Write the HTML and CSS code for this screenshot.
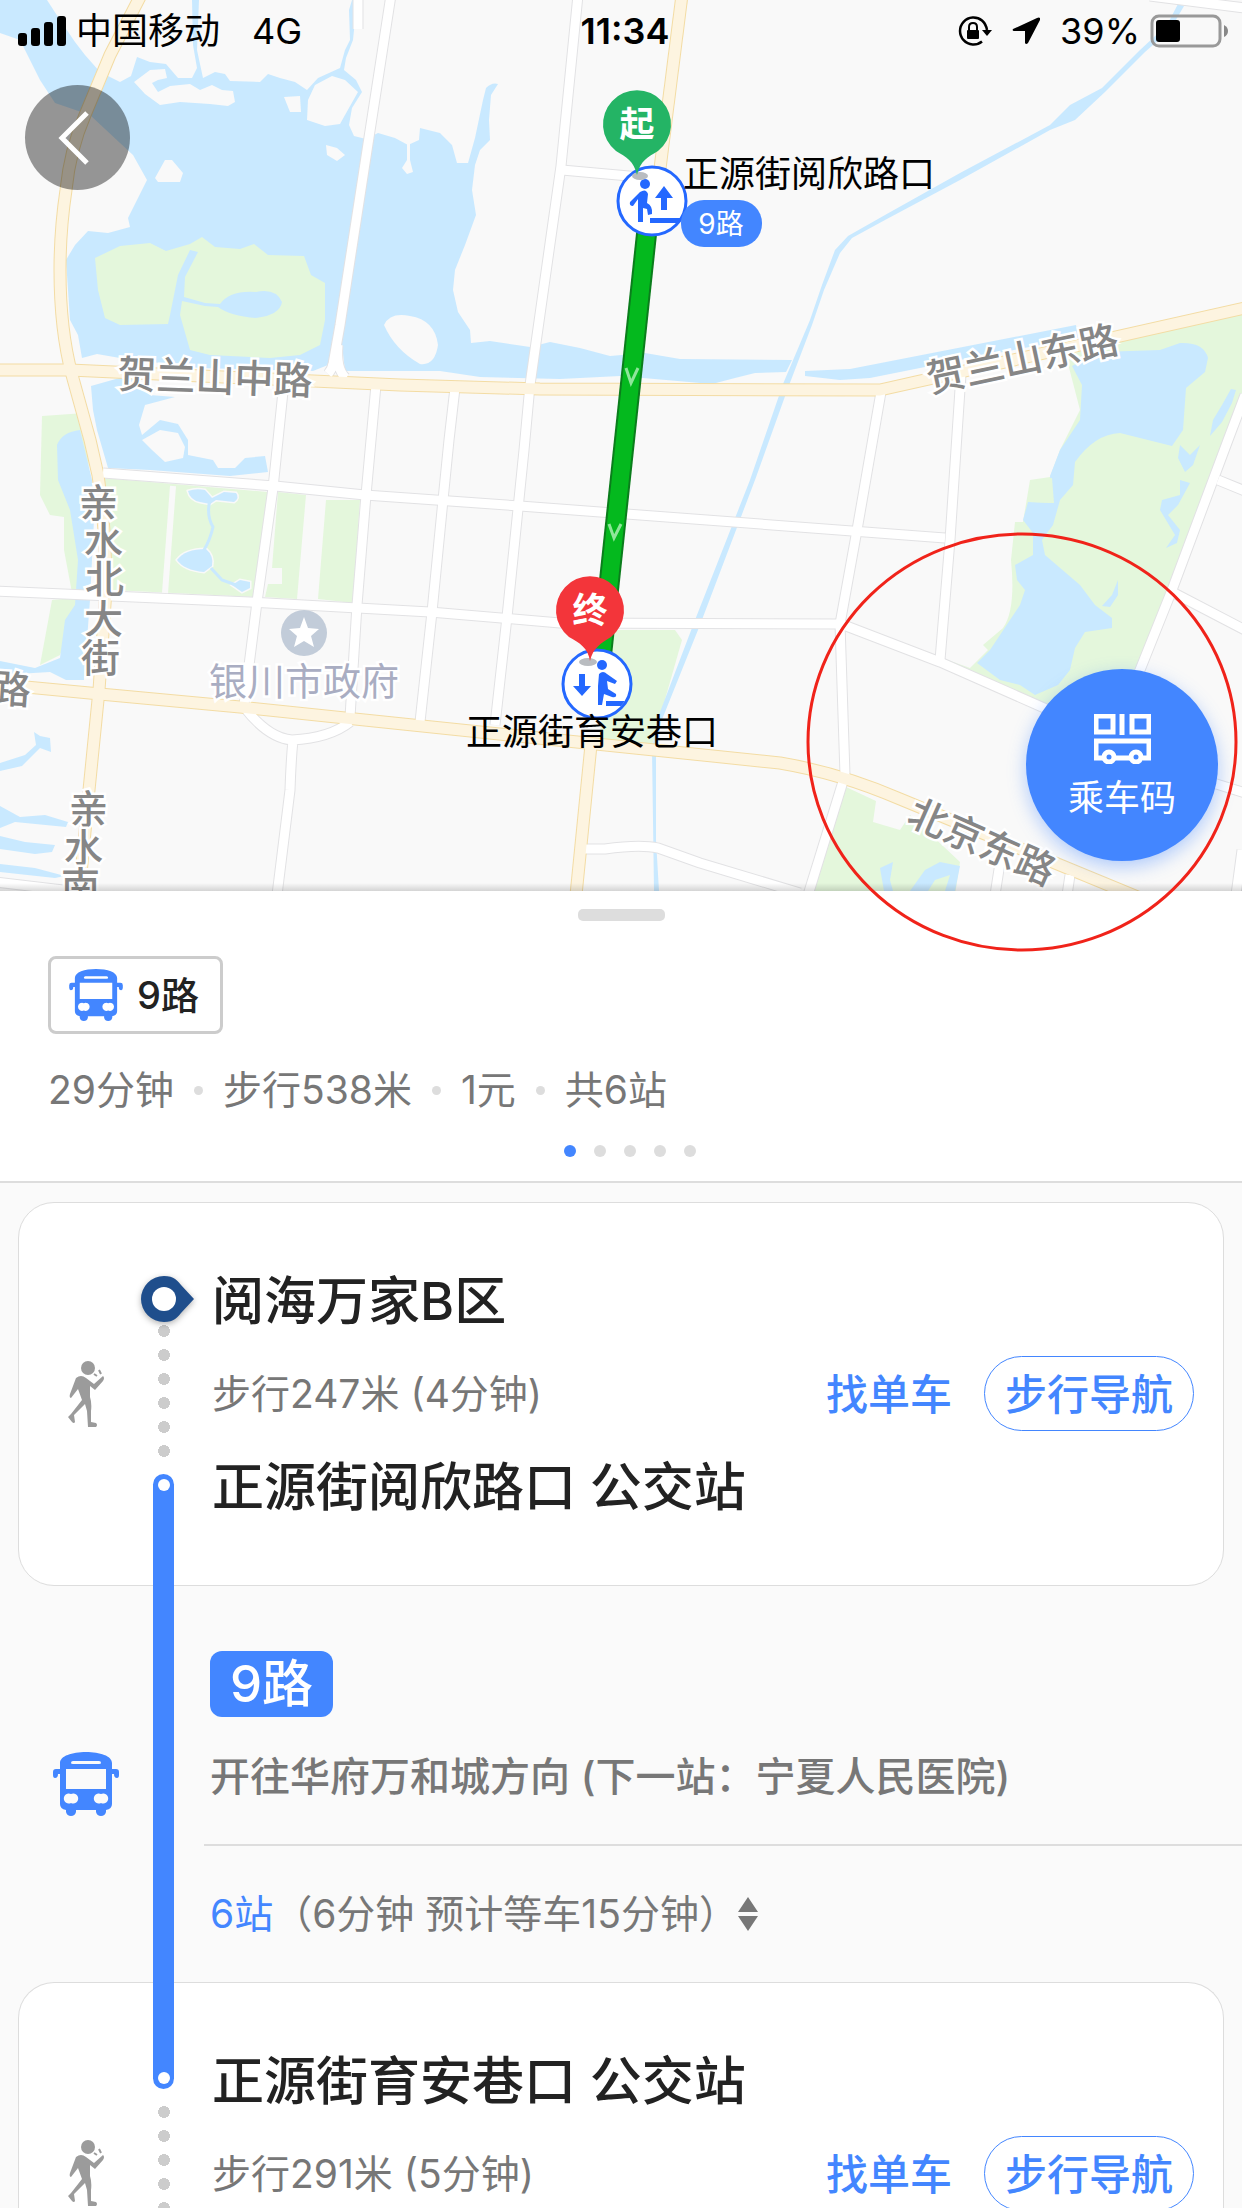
FILE: index.html
```
<!DOCTYPE html>
<html lang="zh-CN">
<head>
    <meta charset="UTF-8">
    <meta name="viewport" content="width=device-width, initial-scale=1.0">
    <title>公交路线</title>
    <link rel="stylesheet" href="styles.css">
</head>
<body>
    <svg class="symbols" aria-hidden="true">
        <symbol id="bus" viewBox="0 0 66 64">
            <path fill="currentColor" fill-rule="evenodd" d="M7 17 V11 C7 4 19 0 33 0 C47 0 59 4 59 11 V17 H63 Q66 17 66 20 V23 Q66 26 64 26 Q61 26 61 22 H59 V52 Q59 57 53 58 V60 Q52 64 48 64 Q44 64 43 60 V58 H23 V60 Q22 64 18 64 Q14 64 13 60 V58 Q7 57 7 52 V22 H5 Q5 26 2 26 Q0 26 0 23 V20 Q0 17 3 17 Z M20 9 Q18 9 18 11 Q18 12 20 12 H46 Q48 12 48 11 Q48 9 46 9 Z M13 17 V37 H53 V17 Z M18 42 A5 5 0 1 0 18 51 A5 5 0 1 0 18 42 Z M48 42 A5 5 0 1 0 48 51 A5 5 0 1 0 48 42 Z"/>
        </symbol>
        <symbol id="walker" viewBox="0 0 36 66">
            <circle cx="20" cy="7" r="7" fill="currentColor"/>
            <path fill="currentColor" d="M8 17 Q13 13 18 17 L26 23 L35 15 Q37 17 35 20 L27 29 L22 25 L22 36 Q24 42 23 50 L23 61 L28 62 Q30 64 28 66 L20 66 L19 50 L17 43 L6 54 L7 61 Q6 63 4 61 L0 56 L3 53 L14 39 L10 28 L3 37 Q1 37 2 33 Z"/>
            <path stroke="currentColor" stroke-width="2" d="M26 13 L29 15 M31 9 L33 13"/>
        </symbol>
    </svg>

    <div class="map">
        <svg class="map-canvas" viewBox="0 0 1242 891" role="img" aria-label="路线地图">
            <defs>
                <g id="major">
                    <path d="M141 -5 L110 55 L85 115 Q70 150 66 190 Q60 230 60 270 Q60 330 72 375 L90 440 L98 475 Q106 530 106 590 L99 690 L88 800 L79 895"/>
                    <path d="M-5 370 H70 L400 385 L540 389 L880 390 L1245 308"/>
                    <path d="M-5 684 L100 694 L240 707 L480 732 L780 763 Q840 773 900 799 L1140 898"/>
                    <path d="M682 -5 L656 200"/>
                    <path d="M591 745 L576 895"/>
                </g>
                <g id="minor">
                    <path d="M391 -5 L340 325 L332 370"/>
                    <path d="M328 374 Q335 366 337 345 M346 378 Q336 370 338 345"/>
                    <path d="M358 -5 V29"/>
                    <path d="M578 -5 L561 166 L530 385 L524 450 L507 617 L495 725"/>
                    <path d="M562 170 L640 177"/>
                    <path d="M455 388 L449 440 L443 500 L432 612 L420 722"/>
                    <path d="M376 385 L366 495 L357 605 L350 717"/>
                    <path d="M284 382 L273 488 L257 602 L244 705"/>
                    <path d="M103 473 L275 486 L365 495 L520 506 L680 518 L945 538"/>
                    <path d="M-5 591 L250 602 L430 612 L560 623 L841 624 L940 662 L1060 715"/>
                    <path d="M881 392 L857 530 L840 624 L845 775 L808 895"/>
                    <path d="M961 374 L950 540 L940 660"/>
                    <path d="M1245 395 L1228 440 L1172 590 L1120 720"/>
                    <path d="M1218 480 L1245 491 M1174 593 L1245 630 M1210 782 L1245 793"/>
                    <path d="M244 707 Q268 738 292 740 Q330 738 350 722 M293 740 Q291 760 290 790 L277 895"/>
                    <path d="M584 849 H605 Q640 844 658 848 L700 863 L800 893"/>
                    <path d="M1150 -4 L1245 8"/>
                    <path d="M1002 850 L995 895 M1070 875 L1067 895 M-5 882 L80 892 M1242 850 L1236 895"/>
                </g>
            </defs>

            <rect width="1242" height="891" fill="#f9f9f9"/>

            <!-- parks -->
            <g fill="#e4f7dc">
                <path d="M42 416 L85 413 L90 440 L80 600 L60 655 L40 665 L52 600 L73 598 L64 550 V517 L50 515 L40 495 Z"/>
                <path d="M103 478 L268 492 L255 597 L112 590 Z"/>
                <path d="M278 492 L306 495 L297 599 L265 597 L268 584 L282 584 L282 568 L272 568 Z M326 500 L360 500 L353 603 L318 599 Z"/>
                <path d="M608 630 H675 L682 640 L652 745 L600 738 Z"/>
                <path d="M1245 310 L1110 342 L1066 356 L1080 410 L1060 450 L1050 477 L1030 480 L1023 522 L1015 522 L1011 560 Q1016 610 1003 628 L983 645 L988 650 L970 668 L945 659 L1060 710 L1135 675 L1228 440 L1245 400 Z"/>
                <path d="M846 787 L876 801 L873 822 L900 830 L910 815 L960 862 L955 895 H812 Z"/>
            </g>

            <!-- water -->
            <g fill="#c9e9ff">
                <path d="M0 0 H47 L60 20 L75 42 L85 55 L100 72 L120 82 L131 76 L137 57 L150 62 L166 64 L178 78 L192 78 L197 68 L193 45 L192 0 H199 L197 50 L203 78 L215 72 L225 74 L230 81 L260 82 L268 74 L280 78 L295 82 L307 90 L318 78 L340 68 L345 50 L350 40 L349 10 L352 0 H357 L353 40 L346 58 L344 70 L356 80 L362 92 L352 108 L349 125 L354 136 L366 139 L378 133 L395 138 L408 145 L419 140 L420 128 L440 133 L452 145 L457 163 L468 163 L475 138 L483 100 L486 88 Q492 82 498 84 L491 95 L489 120 L490 140 L480 150 L475 165 L472 190 L476 215 L465 245 L455 270 L453 290 L458 312 L470 330 L471 343 L490 341 L530 347 L550 342 L580 348 L610 356 L645 353 L680 359 L792 360 L786 372 L755 373 L735 378 L712 384 L620 376 L560 379 L480 377 L440 371 H345 L342 345 L333 345 L328 365 L313 371 L200 368 L120 358 L97 354 L82 358 L78 335 L70 320 L66 260 L75 245 L88 231 L108 233 L130 227 L128 218 L137 200 L147 180 L133 155 L120 143 L90 115 L55 103 L40 80 L20 40 L0 33 Z"/>
                <path d="M91 386 L130 375 L150 395 L175 397 L145 405 L139 425 L142 435 L160 420 L178 424 L188 440 L188 455 L213 460 L218 468 L235 468 L245 458 L265 456 L268 472 L230 476 L150 470 L108 468 L97 430 L93 410 Z"/>
                <path d="M57 445 Q62 432 80 430 L92 480 L94 520 L90 600 L84 680 L66 680 L50 672 L0 675 V661 L35 668 L60 658 L65 620 L75 605 L78 560 L70 510 L58 480 Z"/>
                <path d="M805 371 L850 369 L1076 325 L1078 338 L960 360 L870 378 L840 380 L805 376 Z"/>
                <path d="M1072 366 L1100 352 L1160 350 L1180 343 Q1204 342 1208 358 L1205 372 L1186 388 L1183 430 L1172 446 L1120 433 Q1095 434 1075 462 L1073 485 L1060 500 L1053 525 L1042 540 L1045 555 L1080 585 L1095 605 L1112 618 L1112 628 L1085 632 L1075 648 L1070 670 L1058 685 L1035 695 L1020 685 L1000 680 L977 663 L990 650 L1020 605 L1025 590 L1017 580 L1015 565 L1033 555 L1033 533 L1023 520 L1028 502 L1053 503 L1050 476 L1060 450 L1080 420 L1082 385 Z"/>
                <path d="M0 763 L25 755 L36 745 L34 732 L40 736 L50 738 L51 752 L40 748 L22 766 L0 771 Z"/>
                <path d="M0 806 L20 817 L45 815 L68 822 L66 827 L15 822 L0 828 Z M0 836 L25 842 L55 845 L52 852 L35 854 L0 849 Z M0 864 L35 868 L65 876 L55 878 L0 872 Z"/>
                <path d="M1180 445 L1190 455 L1200 445 L1193 465 L1185 472 L1178 458 Z M1180 480 L1190 483 L1178 505 L1168 515 L1180 530 L1177 543 L1166 548 L1175 535 L1160 510 L1162 500 L1180 495 Z M1118 580 L1118 595 L1110 607 L1102 606 L1112 595 Z"/>
                <path d="M880 868 L893 862 L890 880 L893 891 H884 Z M910 891 L925 870 L940 862 L960 866 L955 891 H945 L950 875 L935 880 L928 891 Z"/>
                <path d="M1231 389 L1236 390 L1232 403 L1222 422 L1210 436 L1213 420 L1222 405 Z"/>
                <path d="M1178 4 L1184 6 L1170 30 L1145 52 L1105 92 L1075 120 L1050 130 L960 180 L885 220 L852 238 L840 253 L824 290 L812 325 L788 388 L755 480 L700 625 L661 722 L656 750 V840 L659 891 H654 L652 750 L657 720 L695 620 L750 480 L783 384 L810 320 L822 285 L835 250 L848 236 L885 215 L960 173 L1050 125 L1070 105 L1102 88 L1140 50 L1167 25 Z"/>
            </g>

            <!-- park ponds -->
            <g class="ponds">
                <path d="M188 491 Q196 488 205 490 L212 498 L224 492 L236 493 Q240 498 234 502 L216 500 L210 504 L200 502 Q190 500 188 491 Z"/>
                <path d="M177 560 Q185 549 206 549 Q214 556 212 566 L204 572 Q184 570 177 560 Z"/>
                <path d="M232 585 L240 580 L250 582 L250 588 L242 592 Z"/>
                <path class="stream" d="M210 500 Q206 515 213 527 Q210 540 204 550 M211 568 L222 580 L236 585"/>
            </g>

            <!-- islands -->
            <g fill="#f9f9f9">
                <path d="M134 82 L150 70 L165 69 L167 78 L158 80 L152 83 L158 92 L170 86 L190 84 L200 90 L212 85 L222 90 L233 91 L235 102 L228 106 L210 104 L180 102 L160 105 L145 94 Z"/>
                <path d="M308 100 L315 85 L332 76 L345 80 L358 92 L345 115 L340 124 L325 126 L307 120 Z"/>
                <path d="M284 97 L300 96 L301 112 L290 112 Z M326 145 L337 148 L345 155 L337 161 L327 155 Z M155 178 L165 160 L172 160 L183 173 L180 182 L158 182 Z"/>
                <path d="M407 140 H410 L410 160 L413 172 L407 174 L402 168 L407 160 Z"/>
                <path d="M384 325 Q390 312 410 316 Q435 320 438 345 Q435 366 420 364 Q395 350 384 325 Z"/>
                <path d="M142 440 L160 430 L178 433 L185 447 L183 458 L165 462 L152 450 Z"/>
            </g>
            <g fill="#e4f7dc">
                <path d="M95 258 L120 246 L150 243 L166 251 L190 244 L202 237 L215 247 L240 249 L254 244 L268 255 L304 256 L311 275 L325 283 L325 320 L320 345 L300 355 L270 358 L210 355 L190 350 L180 315 L182 301 L205 306 L218 307 Q230 316 256 318 Q280 315 282 302 Q276 288 256 292 Q230 290 220 304 L205 303 L184 297 L185 277 L198 252 L190 250 L178 275 L170 315 L168 324 L120 325 L105 318 L98 290 Z"/>
                <path d="M1030 481 L1052 478 L1054 503 L1030 502 Z"/>
            </g>

            <!-- roads -->
            <g class="road">
                <use href="#minor" stroke="#e2e2e4" stroke-width="11"/>
                <use href="#major" stroke="#f3dca4" stroke-width="13"/>
                <use href="#minor" stroke="#fff" stroke-width="9"/>
                <use href="#major" stroke="#fdf4e0" stroke-width="11"/>
                <path d="M173 486 L165 593" stroke="#f9f9f9" stroke-width="6"/>
            </g>

            <!-- poi -->
            <circle cx="304" cy="633" r="23" fill="#c2ccd9"/>
            <path fill="#fff" d="M304 617 L308 628 L319 629 L311 636 L314 647 L304 641 L294 647 L297 636 L289 629 L300 628 Z"/>
            <text class="poi" x="209" y="695">银川市政府</text>

            <g class="road-name">
                <text transform="translate(117 388) rotate(2)">贺兰山中路</text>
                <text transform="translate(930 393) rotate(-12)">贺兰山东路</text>
                <text transform="translate(905 823) rotate(24)">北京东路</text>
                <text x="79 84 85 84 81" y="517 555 593 633 672">亲水北大街</text>
                <text x="69 64 61" y="823 862 900">亲水南</text>
                <text transform="translate(-9 702) rotate(4)">路</text>
            </g>

            <!-- bus route -->
            <path d="M648 220 L601 660" stroke="#0b7d1c" stroke-width="21"/>
            <path d="M648 220 L601 660" stroke="#04b91e" stroke-width="17"/>
            <path class="chevron" d="M626 368 L631 383 L638 368 M609 524 L614 538 L621 524"/>

            <circle class="stop" cx="652" cy="201" r="34"/>
            <g fill="#2468ff">
                <circle cx="645" cy="184" r="5"/>
                <path d="M640 192 Q646 188 648 194 L647 203 Q653 206 652 214 L648 215 L647 209 L643 208 L643 222 L638 222 V203 L638 199 L633 206 Q629 206 630 202 Z"/>
                <path d="M664 186 L673 198 H667 V210 H661 V198 H655 Z M650 218 H681 L678 223 H650 Z"/>
            </g>
            <circle class="stop" cx="597" cy="684" r="34"/>
            <g fill="#2468ff">
                <circle cx="602" cy="665" r="5"/>
                <path d="M599 674 Q603 670 607 674 L617 681 L615 684 L607 681 L608 689 L616 694 Q617 698 612 697 L604 694 L602 705 H598 V686 Z"/>
                <path d="M582 696 L573 686 H579 V674 H585 V686 H591 Z M606 701 H625 L621 706 H606 Z"/>
            </g>
            <ellipse cx="640" cy="176" rx="8" ry="4" fill="#b9bcc0"/>
            <path d="M637 175 C634 161 626 157 616 151 A34 34 0 1 1 658 151 C648 157 640 161 637 175 Z" fill="#24b465"/>
            <text class="pin" x="637" y="137">起</text>
            <ellipse cx="588" cy="662" rx="9" ry="4" fill="#b9bcc0"/>
            <path d="M590 661 C588 648 580 643 569 637 A34 34 0 1 1 611 637 C601 643 593 648 590 661 Z" fill="#f3353a"/>
            <text class="pin" x="590" y="623">终</text>

            <text class="stop-name" x="683" y="187">正源街阅欣路口</text>
            <text class="stop-name" x="466" y="745">正源街育安巷口</text>
            <rect x="681" y="200" width="81" height="47" rx="23" fill="#4386ff"/>
            <text class="line-name" x="721" y="234">9路</text>
        </svg>

        <div class="status-bar">
            <div class="status-left">
                <svg width="48" height="30" viewBox="0 0 48 30">
                    <rect y="17" width="9" height="13" rx="3"/>
                    <rect x="13" y="12" width="9" height="18" rx="3"/>
                    <rect x="26" y="6" width="9" height="24" rx="3"/>
                    <rect x="39" width="9" height="30" rx="3"/>
                </svg>
                <span class="carrier">中国移动</span>
                <span>4G</span>
            </div>
            <strong class="time">11:34</strong>
            <div class="status-right">
                <svg width="34" height="30" viewBox="0 0 34 30">
                    <path d="M24 4.500 A13.500 13.500 0 1 0 24 25.500 M24 4.500 Q28 8 29 14" fill="none" stroke="#000" stroke-width="2.500"/>
                    <path d="M24 14 H34 L29 20 Z"/>
                    <rect x="9" y="14" width="12" height="9" rx="1"/>
                    <path d="M11 14 V11 Q11 7 15 7 Q19 7 19 11 V14" fill="none" stroke="#000" stroke-width="2"/>
                </svg>
                <svg class="locate" width="28" height="28" viewBox="0 0 28 28">
                    <path d="M28 1 Q27 0 25 1 L1 12 Q0 14 2 14 H13 V26 Q14 28 16 26 L28 3 Z"/>
                </svg>
                <span>39%</span>
                <svg width="78" height="34" viewBox="0 0 78 34">
                    <rect x="2" y="2" width="68" height="30" rx="7" fill="none" stroke="#999" stroke-width="3"/>
                    <rect x="6" y="6" width="24" height="22" rx="3"/>
                    <path d="M74 11 Q78 13 78 17 Q78 21 74 23 Z" fill="#888"/>
                </svg>
            </div>
        </div>

        <button class="back" aria-label="返回">
            <svg width="32" height="54" viewBox="0 0 32 54"><path d="M29 2 L4 27 L29 52" fill="none" stroke="#fff" stroke-width="5"/></svg>
        </button>

        <button class="ride-code">
            <svg width="57" height="50" viewBox="0 0 57 50" fill="none" stroke="#fff" stroke-width="5">
                <path d="M2 2 H19 V18 H2 Z M38 2 H55 V18 H38 Z M28 0 V21"/>
                <path d="M9 44 H2 V27 H55 V44 H49 M21 44 H36"/>
                <circle cx="15" cy="43" r="5"/>
                <circle cx="42" cy="43" r="5"/>
            </svg>
            <span>乘车码</span>
        </button>

        <svg class="highlight" width="432" height="420" viewBox="0 0 432 420" aria-hidden="true">
            <ellipse cx="216" cy="210" rx="214" ry="208" fill="none" stroke="#f0231a" stroke-width="3"/>
        </svg>
    </div>

    <div class="sheet">
        <div class="handle"></div>
        <div class="route-tag">
            <svg class="tag-bus"><use href="#bus"/></svg>
            <span>9路</span>
        </div>
        <ul class="summary">
            <li>29分钟</li>
            <li>步行538米</li>
            <li>1元</li>
            <li>共6站</li>
        </ul>
        <div class="pager">
            <i class="active"></i><i></i><i></i><i></i><i></i>
        </div>
    </div>

    <div class="legs">
        <section class="leg card">
            <svg class="leg-icon walk"><use href="#walker"/></svg>
            <div class="rail">
                <svg class="origin" width="54" height="58" viewBox="0 0 54 58">
                    <path d="M23 6 C33 6 37 11 40 15 L53 29 L40 43 C37 47 33 52 23 52 A23 23 0 0 1 23 6 Z" fill="#1f4e8c"/>
                    <circle cx="23" cy="29" r="12" fill="#fff"/>
                </svg>
                <i class="dots"></i>
                <div class="track first"></div>
            </div>
            <div class="leg-body">
                <h2>阅海万家B区</h2>
                <div class="walk-row">
                    <span>步行247米 (4分钟)</span>
                    <a href="#bike">找单车</a>
                    <button class="nav-button">步行导航</button>
                </div>
                <h2>正源街阅欣路口 公交站</h2>
            </div>
        </section>

        <section class="leg transit">
            <svg class="leg-icon ride"><use href="#bus"/></svg>
            <div class="rail"><div class="track"></div></div>
            <div class="ride-body">
                <span class="line-tag">9路</span>
                <p class="direction">开往华府万和城方向 (下一站：宁夏人民医院)</p>
                <button class="stations">
                    <span class="count">6站</span>
                    <span>（6分钟 预计等车15分钟）</span>
                    <svg width="20" height="34" viewBox="0 0 20 34"><path d="M10 0 L20 15 H0 Z M0 19 H20 L10 34 Z" fill="#777"/></svg>
                </button>
            </div>
        </section>

        <section class="leg card last-leg">
            <svg class="leg-icon walk"><use href="#walker"/></svg>
            <div class="rail">
                <div class="track last"></div>
                <i class="dots after"></i>
            </div>
            <div class="leg-body">
                <h2>正源街育安巷口 公交站</h2>
                <div class="walk-row">
                    <span>步行291米 (5分钟)</span>
                    <a href="#bike">找单车</a>
                    <button class="nav-button">步行导航</button>
                </div>
            </div>
        </section>
    </div>
</body>
</html>
```
FILE: styles.css
```
* {
    box-sizing: border-box;
}
body {
    margin: 0;
    height: 100vh;
    overflow: hidden;
    background-color: #fafafa;
    color: #222;
    font-family: Inter, "Noto Sans CJK SC", sans-serif;
    font-size: 39px;
}
button {
    font: inherit;
    border: none;
    background: none;
    padding: 0;
    cursor: pointer;
}
h2, p, ul {
    margin: 0;
    padding: 0;
}
.symbols {
    display: none;
}

/* map */
.map {
    position: relative;
}
.map::after {
    content: "";
    position: absolute;
    left: 0;
    right: 0;
    bottom: 0;
    height: 8px;
    background: linear-gradient(rgba(0, 0, 0, 0), rgba(0, 0, 0, 0.15));
}
.map-canvas {
    display: block;
    width: 100%;
    height: auto;
}
.road {
    fill: none;
    stroke-linejoin: round;
}
.ponds {
    fill: #c9e9ff;
    stroke: #f9f9f9;
    stroke-width: 3px;
    paint-order: stroke;
}
.ponds .stream {
    fill: none;
    stroke: #c9e9ff;
}
.road-name {
    font-size: 39px;
    fill: #868686;
    font-weight: 500;
    stroke: #fff;
    stroke-width: 5px;
    paint-order: stroke;
}
.poi {
    font-size: 38px;
    fill: #a9adc2;
    stroke: #fff;
    stroke-width: 5px;
    paint-order: stroke;
}
.chevron {
    fill: none;
    stroke: #8ee69a;
    stroke-width: 3px;
}
.stop {
    fill: #fff;
    stroke: #2468ff;
    stroke-width: 3px;
}
.pin {
    font-size: 35px;
    font-weight: 700;
    fill: #fff;
    text-anchor: middle;
}
.stop-name {
    font-size: 36px;
    fill: #000;
}
.line-name {
    font-size: 28px;
    fill: #fff;
    text-anchor: middle;
}

.status-bar {
    position: absolute;
    top: 0;
    left: 0;
    right: 0;
    height: 62px;
    padding: 0 14px 0 18px;
    display: grid;
    grid-template-columns: 1fr auto 1fr;
    align-items: center;
    color: #000;
    font-size: 36px;
    line-height: 62px;
}
.status-left,
.status-right {
    display: flex;
    align-items: center;
}
.status-right {
    justify-content: flex-end;
    gap: 10px;
}
.locate {
    margin: 0 10px 0 10px;
}
.carrier {
    margin: 0 32px 0 10px;
}
.time {
    padding-left: 4px;
    font-weight: 600;
}

.back {
    position: absolute;
    top: 85px;
    left: 25px;
    width: 105px;
    height: 105px;
    border-radius: 50%;
    background-color: rgba(0, 0, 0, 0.4);
    display: flex;
    align-items: center;
    justify-content: center;
    padding-right: 8px;
}

.ride-code {
    position: absolute;
    right: 24px;
    bottom: 30px;
    width: 192px;
    height: 192px;
    padding-top: 8px;
    border-radius: 50%;
    background-color: #4386ff;
    box-shadow: 0 6px 18px rgba(67, 134, 255, 0.4);
    color: #fff;
    font-size: 36px;
    line-height: 52px;
    display: flex;
    flex-direction: column;
    align-items: center;
    justify-content: center;
    gap: 8px;
}
.highlight {
    position: absolute;
    right: 4px;
    bottom: -61px;
    z-index: 2;
    pointer-events: none;
}

/* route summary */
.sheet {
    background-color: #fff;
    border-bottom: 2px solid #ddd;
    padding: 18px 48px 24px;
}
.handle {
    width: 87px;
    height: 12px;
    margin: 0 auto 35px;
    border-radius: 5px;
    background-color: #ddd;
}
.route-tag {
    display: inline-flex;
    align-items: center;
    gap: 14px;
    height: 78px;
    padding: 0 21px 0 18px;
    border: 3px solid #ccc;
    border-radius: 8px;
    font-size: 38px;
    font-weight: 500;
}
.route-tag span {
    padding-bottom: 5px;
}
.tag-bus {
    width: 54px;
    height: 52px;
    color: #4386ff;
}
.summary {
    list-style: none;
    display: flex;
    margin-top: 26px;
    color: #777;
    line-height: 60px;
}
.summary li {
    display: flex;
    align-items: center;
}
.summary li + li::before {
    content: "";
    width: 9px;
    height: 9px;
    margin: 0 20px;
    border-radius: 50%;
    background-color: #ddd;
}
.pager {
    display: flex;
    justify-content: center;
    gap: 18px;
    margin-top: 25px;
    padding-left: 18px;
}
.pager i {
    width: 12px;
    height: 12px;
    border-radius: 50%;
    background-color: #ddd;
}
.pager .active {
    background-color: #4386ff;
}

/* legs */
.legs {
    padding-top: 19px;
}
.leg {
    display: grid;
    grid-template-columns: 134px 21px minmax(0, 1fr);
}
.card {
    margin: 0 18px;
    border: 1px solid #ddd;
    border-radius: 36px;
    background-color: #fff;
}
.last-leg {
    border-bottom: none;
    border-radius: 36px 36px 0 0;
}
.transit {
    padding-left: 19px;
}
.leg-icon {
    align-self: center;
    justify-self: center;
}
.walk {
    width: 36px;
    height: 66px;
    color: #9b9b9b;
}
.last-leg .walk {
    align-self: start;
    margin-top: 157px;
}
.ride {
    width: 66px;
    height: 64px;
    color: #4386ff;
}
.rail {
    display: flex;
    flex-direction: column;
    align-items: center;
}
.origin {
    flex: none;
    margin: 67px -22px -9px -12px;
    align-self: flex-start;
    filter: drop-shadow(0 2px 3px rgba(0, 0, 0, 0.3));
}
.dots {
    flex: none;
    width: 12px;
    height: 144px;
    margin: 0 0 11px;
    background: radial-gradient(circle, #ccc 6px, transparent 6px) 0 0 / 12px 24px;
}
.dots.after {
    flex: 1;
    margin: 11px 0 0;
}
.track {
    width: 21px;
    flex: 1;
    background-color: #4386ff;
}
.track.first,
.track.last {
    display: flex;
    justify-content: center;
}
.track.first {
    margin-bottom: -1px;
    border-radius: 11px 11px 0 0;
}
.track.last {
    flex: none;
    height: 107px;
    margin-top: -1px;
    align-items: flex-end;
    border-radius: 0 0 11px 11px;
}
.track.first::before,
.track.last::before {
    content: "";
    width: 12px;
    height: 12px;
    margin: 5px 0;
    border-radius: 50%;
    background-color: #fff;
}
.leg-body {
    padding: 59px 29px 57px 38px;
}
h2 {
    font-size: 52px;
    font-weight: 500;
    line-height: 80px;
}
.walk-row {
    display: flex;
    align-items: center;
    margin: 14px 0 17px;
    color: #777;
}
.walk-row span,
.walk-row a {
    padding-bottom: 5px;
}
.walk-row a {
    margin-left: auto;
    color: #4386ff;
    font-size: 42px;
    font-weight: 500;
    text-decoration: none;
}
.nav-button {
    height: 75px;
    margin-left: 32px;
    padding: 0 20px 5px;
    border: 1px solid #4386ff;
    border-radius: 38px;
    color: #4386ff;
    font-size: 42px;
    font-weight: 500;
}
.ride-body {
    padding: 65px 0 0 30px;
}
.line-tag {
    display: inline-block;
    margin-left: 6px;
    padding: 0 20px;
    border-radius: 12px;
    background-color: #4386ff;
    color: #fff;
    font-size: 51px;
    font-weight: 500;
    line-height: 66px;
}
.direction {
    padding: 30px 0 37px 6px;
    border-bottom: 2px solid #ddd;
    color: #777;
    font-size: 40px;
    font-weight: 500;
    line-height: 60px;
}
.stations {
    display: flex;
    align-items: center;
    width: 100%;
    height: 136px;
    padding-left: 6px;
    color: #777;
}
.stations span {
    padding-bottom: 6px;
}
.stations .count {
    color: #4386ff;
}
```
